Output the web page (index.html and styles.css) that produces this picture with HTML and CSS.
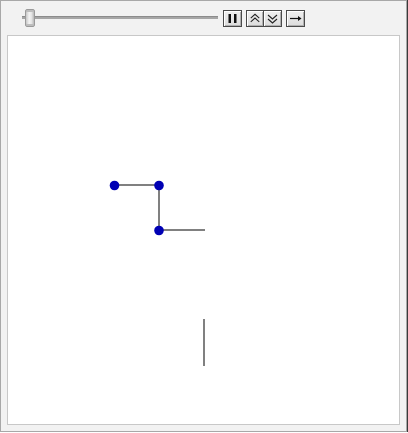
FILE: index.html
```html
<!DOCTYPE html>
<html>
<head>
<meta charset="utf-8">
<link rel="stylesheet" href="styles.css">
</head>
<body>
<div class="frame">
  <div class="toolbar">
    <div class="slider">
      <div class="track"></div>
      <div class="thumb"></div>
    </div>
    <div class="buttons">
      <div class="btn">
        <svg width="17" height="15" viewBox="0 0 17 15"><rect x="4.5" y="3" width="2.5" height="9" fill="#111"/><rect x="10" y="3" width="2.5" height="9" fill="#111"/></svg>
      </div>
      <div class="pair">
        <div class="btn half">
          <svg width="17" height="15" viewBox="0 0 17 15"><path d="M4 7 L8.5 3 L13 7 M4 11 L8.5 7 L13 11" fill="none" stroke="#222" stroke-width="1.1"/></svg>
        </div>
        <div class="btn half">
          <svg width="17" height="15" viewBox="0 0 17 15"><path d="M4 4 L8.5 8 L13 4 M4 8 L8.5 12 L13 8" fill="none" stroke="#222" stroke-width="1.1"/></svg>
        </div>
      </div>
      <div class="btn">
        <svg width="17" height="15" viewBox="0 0 17 15"><path d="M3 7.5 H12" stroke="#111" stroke-width="1.2"/><path d="M11 5 L14.5 7.5 L11 10 Z" fill="#111"/></svg>
      </div>
    </div>
  </div>
  <div class="panel">
    <svg class="plot" width="391" height="388" viewBox="8 36 391 388">
      <g stroke="#808080" stroke-width="2" fill="none">
        <line x1="114" y1="185" x2="159" y2="185"/>
        <line x1="159" y1="185" x2="159" y2="230"/>
        <line x1="159" y1="230" x2="205" y2="230"/>
        <line x1="204" y1="319" x2="204" y2="366"/>
      </g>
      <g fill="#0000b4">
        <circle cx="114.5" cy="185.5" r="4.8"/>
        <circle cx="159" cy="185.5" r="4.8"/>
        <circle cx="159" cy="230.5" r="4.8"/>
      </g>
    </svg>
  </div>
</div>
</body>
</html>
```

FILE: styles.css
```css
html, body {
  margin: 0;
  padding: 0;
  background: #ffffff;
}
.frame {
  box-sizing: border-box;
  width: 407px;
  height: 432px;
  border: 1px solid #a8a8a8;
  background: #f2f2f2;
  box-shadow: 1px 0 0 #3a3a3a;
  padding: 0 6px 6px 6px;
  display: flex;
  flex-direction: column;
}
.toolbar {
  height: 34px;
  display: flex;
  align-items: center;
  padding-left: 13px;
}
.slider {
  position: relative;
  width: 198px;
  height: 20px;
}
.track {
  position: absolute;
  left: 2px;
  right: 0;
  top: 8px;
  height: 3px;
  background: #a6a6a6;
  border-top: 1px solid #8c8c8c;
  box-sizing: border-box;
}
.thumb {
  position: absolute;
  left: 5px;
  top: 1px;
  width: 10px;
  height: 18px;
  box-sizing: border-box;
  border: 1px solid #9a9a9a;
  border-radius: 2px;
  background: linear-gradient(to right, #c8c8c8, #f4f4f4 40%, #e4e4e4 70%, #b8b8b8);
  box-shadow: inset 0 2px 0 #bdbdbd, inset 0 -2px 0 #bdbdbd;
}
.buttons {
  display: flex;
  gap: 4px;
  margin-left: 5px;
  padding-top: 1px;
}
.pair {
  display: flex;
}
.btn {
  box-sizing: border-box;
  width: 19px;
  height: 17px;
  border: 1px solid #4a4a4a;
  background: linear-gradient(#f0f0f0, #dcdcdc);
  box-shadow: inset 1px 1px 0 #ffffff, inset -1px -1px 0 #b0b0b0;
  display: flex;
  align-items: center;
  justify-content: center;
}
.btn svg {
  display: block;
}
.half {
  width: 18px;
}
.half + .half {
  border-left: none;
}
.panel {
  flex: 1;
  background: #ffffff;
  border: 1px solid #c8c8c8;
  box-sizing: border-box;
  overflow: hidden;
}
.plot {
  display: block;
}
```
